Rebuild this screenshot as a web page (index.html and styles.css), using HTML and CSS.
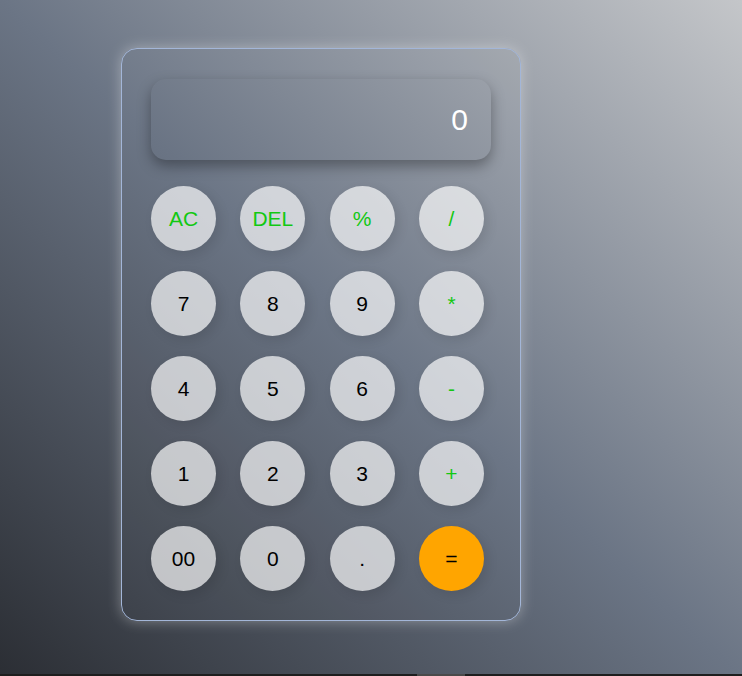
FILE: index.html
```html
<!DOCTYPE html>
<html lang="en">
<head>
<meta charset="utf-8">
<title>Calculator</title>
<link rel="stylesheet" href="styles.css">
</head>
<body>
<main class="page">
  <div class="calculator">
    <div class="display">0</div>
    <div class="keys">
      <button class="key op">AC</button>
      <button class="key op">DEL</button>
      <button class="key op">%</button>
      <button class="key op">/</button>
      <button class="key">7</button>
      <button class="key">8</button>
      <button class="key">9</button>
      <button class="key op">*</button>
      <button class="key">4</button>
      <button class="key">5</button>
      <button class="key">6</button>
      <button class="key op">-</button>
      <button class="key">1</button>
      <button class="key">2</button>
      <button class="key">3</button>
      <button class="key op">+</button>
      <button class="key">00</button>
      <button class="key">0</button>
      <button class="key">.</button>
      <button class="key equal">=</button>
    </div>
  </div>
</main>
<div class="scrollbar"><div class="thumb"></div></div>
</body>
</html>
```
FILE: styles.css
```css
html, body {
  margin: 0;
  height: 100%;
}
body {
  background: linear-gradient(to top right, #2b2e34 0%, #6b7585 50%, #c4c6c9 100%);
  font-family: "Liberation Sans", Arial, sans-serif;
  overflow: hidden;
}
.page {
  padding: 48px 0 0 121px;
}
.calculator {
  box-sizing: border-box;
  width: 400px;
  height: 573px;
  padding: 30px 29px 29px;
  border: 1px solid #a3b6d8;
  border-radius: 16px;
  background: rgba(255, 255, 255, 0.01);
  box-shadow: 0 0 14px rgba(255, 255, 255, 0.35);
  display: flex;
  flex-direction: column;
  gap: 26px;
}
.display {
  box-sizing: border-box;
  height: 81px;
  border-radius: 15px;
  background: rgba(0, 0, 0, 0.01);
  box-shadow: 0 6px 14px rgba(0, 0, 0, 0.34);
  color: #fff;
  font-size: 30px;
  line-height: 81px;
  text-align: right;
  padding-right: 23px;
}
.keys {
  display: grid;
  grid-template-columns: repeat(4, 65px);
  grid-auto-rows: 65px;
  column-gap: 24.33px;
  row-gap: 20px;
}
.key {
  width: 65px;
  height: 65px;
  border: none;
  border-radius: 50%;
  padding: 0;
  background: rgba(255, 255, 255, 0.68);
  box-shadow: 4px 4px 12px rgba(0, 0, 0, 0.1);
  font-family: "Liberation Sans", Arial, sans-serif;
  font-size: 21px;
  color: #000;
}
.key.op {
  color: #12c812;
}
.key.equal {
  background: #ffa500;
  color: #000;
}
.scrollbar {
  position: fixed;
  left: 0;
  right: 0;
  bottom: 0;
  height: 2px;
  background: #1e1e1e;
}
.thumb {
  position: absolute;
  left: 417px;
  width: 48px;
  top: 0;
  bottom: 0;
  background: #4a4a4a;
}
```
